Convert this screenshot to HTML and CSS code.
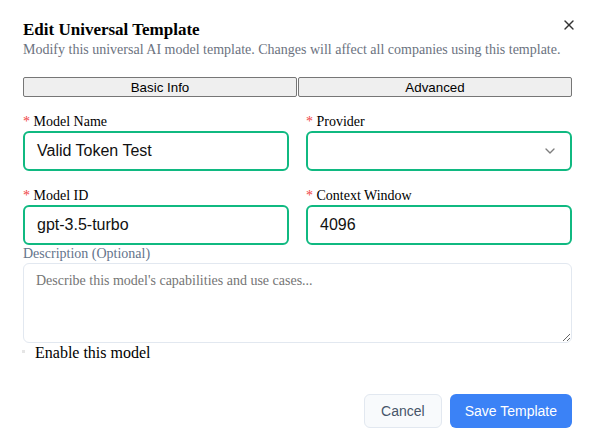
FILE: index.html
```html
<!DOCTYPE html>
<html lang="en">
<head>
<meta charset="utf-8">
<title>Edit Universal Template</title>
<link rel="stylesheet" href="styles.css">
</head>
<body>
<div class="dialog">
  <button class="close" aria-label="Close">
    <svg width="16" height="16" viewBox="0 0 24 24" fill="none" stroke="currentColor" stroke-width="2" stroke-linecap="round"><path d="M18 6 6 18"/><path d="m6 6 12 12"/></svg>
  </button>
  <header class="header">
    <h2 class="title">Edit Universal Template</h2>
    <p class="subtitle">Modify this universal AI model template. Changes will affect all companies using this template.</p>
  </header>
  <div class="tabs">
    <button class="tab">Basic Info</button>
    <button class="tab">Advanced</button>
  </div>
  <div class="grid">
    <div class="field">
      <label class="label"><span class="req">*</span> Model Name</label>
      <div class="input">Valid Token Test</div>
    </div>
    <div class="field">
      <label class="label"><span class="req">*</span> Provider</label>
      <div class="input select">
        <span></span>
        <svg class="chev" width="16" height="16" viewBox="0 0 24 24" fill="none" stroke="currentColor" stroke-width="2" stroke-linecap="round" stroke-linejoin="round"><path d="m6 9 6 6 6-6"/></svg>
      </div>
    </div>
    <div class="field">
      <label class="label"><span class="req">*</span> Model ID</label>
      <div class="input">gpt-3.5-turbo</div>
    </div>
    <div class="field">
      <label class="label"><span class="req">*</span> Context Window</label>
      <div class="input">4096</div>
    </div>
  </div>
  <div class="field">
    <label class="label muted">Description (Optional)</label>
    <textarea class="textarea" placeholder="Describe this model's capabilities and use cases..."></textarea>
  </div>
  <div class="check-row">
    <span class="check"></span>
    <span class="check-label">Enable this model</span>
  </div>
  <footer class="footer">
    <button class="btn btn-cancel">Cancel</button>
    <button class="btn btn-save">Save Template</button>
  </footer>
</div>
</body>
</html>
```
FILE: styles.css
```css
html, body {
  margin: 0;
  padding: 0;
  background: #ffffff;
}
body {
  font-family: "Times New Roman", "Liberation Serif", serif;
  color: #000;
}
.dialog {
  position: relative;
  padding: 19px 23px 0 23px;
  width: 595px;
  height: 447px;
  box-sizing: border-box;
}
.close {
  position: absolute;
  top: 17px;
  right: 18px;
  width: 16px;
  height: 16px;
  padding: 0;
  border: 0;
  background: transparent;
  color: #333;
  display: flex;
}
.header {
  margin-bottom: 19px;
}
.title {
  margin: 0;
  font-family: "Times New Roman", "Liberation Serif", serif;
  font-size: 17px;
  line-height: 22px;
  font-weight: 700;
}
.subtitle {
  margin: 1px 0 0 0;
  font-size: 14px;
  line-height: 16px;
  color: #6b7280;
}
.tabs {
  display: grid;
  grid-template-columns: 1fr 1fr;
  gap: 1px;
}
.tab {
  height: 20px;
  margin: 0;
  padding: 0;
  font-family: "Liberation Sans", Arial, sans-serif;
  font-size: 13.33px;
  color: #000;
  background: #efefef;
  border: 1px solid #767676;
  border-radius: 2px;
}
.grid {
  display: grid;
  grid-template-columns: 1fr 1fr;
  column-gap: 17px;
  row-gap: 16px;
  margin-top: 16px;
}
.field {
  display: flex;
  flex-direction: column;
}
.label {
  font-size: 14px;
  line-height: 18px;
}
.label.muted {
  color: #64748b;
}
.req {
  color: #ef4444;
}
.input {
  height: 40px;
  box-sizing: border-box;
  border: 2px solid #10b981;
  border-radius: 6px;
  padding: 0 12px;
  display: flex;
  align-items: center;
  font-family: "Liberation Sans", Arial, sans-serif;
  font-size: 16px;
  color: #111;
}
.select {
  justify-content: space-between;
}
.chev {
  color: #000;
  opacity: 0.5;
}
.textarea {
  display: block;
  height: 80px;
  box-sizing: border-box;
  border: 1px solid #e2e8f0;
  border-radius: 6px;
  padding: 9px 12px;
  margin: 0;
  font-family: "Times New Roman", "Liberation Serif", serif;
  font-size: 14px;
  resize: vertical;
}
.textarea::placeholder {
  color: #757575;
}
.check-row {
  display: flex;
  align-items: center;
  height: 18px;
  margin-top: 1px;
}
.check {
  width: 3px;
  height: 3px;
  background: #e5e5e5;
  margin-left: -1px;
  margin-right: 10px;
  margin-top: -3px;
}
.check-label {
  font-size: 16px;
  line-height: 18px;
}
.footer {
  display: flex;
  justify-content: flex-end;
  gap: 8px;
  margin-top: 32px;
}
.btn {
  height: 34px;
  box-sizing: border-box;
  border-radius: 6px;
  padding: 0 16px;
  font-family: "Liberation Sans", Arial, sans-serif;
  font-size: 14px;
  margin: 0;
  white-space: nowrap;
}
.btn-cancel {
  background: #f8fafc;
  border: 1px solid #e2e8f0;
  color: #475569;
}
.btn-save {
  background: #3b82f6;
  border: 0;
  color: #ffffff;
  padding: 0 15px;
}
```
